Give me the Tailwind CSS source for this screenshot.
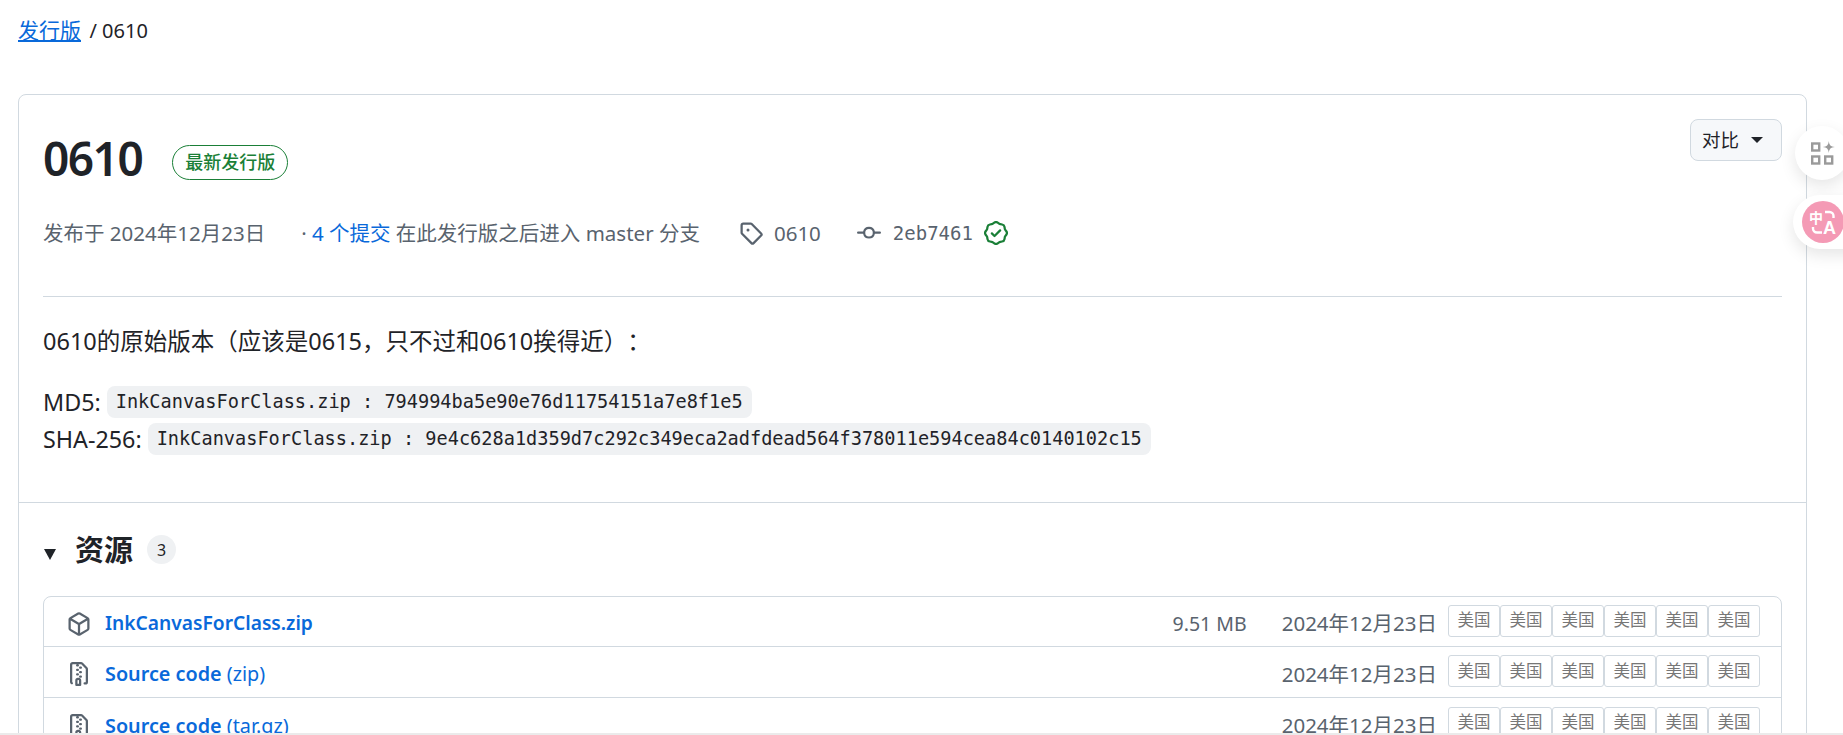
<!doctype html>
<html lang="zh-CN">
<head>
<meta charset="utf-8">
<title>0610</title>
<script src="https://cdn.jsdelivr.net/npm/@tailwindcss/browser@4"></script>
</head>
<body class="bg-white">
<div class="relative h-[735px] w-full overflow-hidden px-[18px] font-['Noto_Sans','Noto_Sans_CJK_SC',sans-serif] text-[#1f2328] [text-spacing-trim:space-all]">

  <!-- breadcrumb -->
  <nav class="h-[94px] pt-[15px] text-[21px] leading-[30px]">
    <a class="text-[#0969da] underline">发行版</a>
    <span class="ml-[3px] text-[20px]">/ 0610</span>
  </nav>

  <!-- release card -->
  <div class="w-[1789px] rounded-t-[8px] border border-[#d1d9e0]">
    <div class="flex h-[407px] flex-col px-[24px]">
      <div class="flex h-[202px] shrink-0 flex-col border-b border-[#d1d9e0]">
        <div class="mt-[28px] flex h-[70px] items-start">
          <h1 class="text-[46px] leading-[70px] font-semibold tracking-[-1.5px]">0610</h1>
          <span class="ml-[30px] mt-[22px] flex h-[35px] w-[116px] items-center justify-center rounded-full border border-[#1a7f37] text-[18px] font-medium text-[#1a7f37]">最新发行版</span>
          <button class="ml-auto -mt-[4px] flex h-[42px] w-[92px] items-center justify-center gap-[12px] rounded-[8px] border border-[#d1d9e0] bg-[#f6f8fa] pr-[7px] text-[18.5px]">
            对比
            <span class="h-0 w-0 border-x-[6px] border-t-[6px] border-x-transparent border-t-[#1f2328]"></span>
          </button>
        </div>
        <div class="mt-[26px] flex items-center text-[20.5px] leading-[28px] text-[#59636e]">
          <span>发布于 2024年12月23日</span>
          <span class="ml-[36px]">· <a class="text-[#0969da]">4 个提交</a> 在此发行版之后进入 master 分支</span>
          <svg class="ml-[39px]" width="24" height="24" viewBox="0 0 16 16" fill="#59636e"><path d="M1 7.775V2.75C1 1.784 1.784 1 2.75 1h5.025c.464 0 .91.184 1.238.513l6.25 6.25a1.75 1.75 0 0 1 0 2.474l-5.026 5.026a1.75 1.75 0 0 1-2.474 0l-6.25-6.25A1.752 1.752 0 0 1 1 7.775Zm1.5 0c0 .066.026.13.073.177l6.25 6.25a.25.25 0 0 0 .354 0l5.025-5.025a.25.25 0 0 0 0-.354l-6.25-6.25a.25.25 0 0 0-.177-.073H2.75a.25.25 0 0 0-.25.25ZM6 5a1 1 0 1 1 0 2 1 1 0 0 1 0-2Z"/></svg>
          <span class="ml-[11px]">0610</span>
          <svg class="ml-[36px]" width="24" height="24" viewBox="0 0 16 16" fill="#59636e"><path d="M11.93 8.5a4.002 4.002 0 0 1-7.86 0H.75a.75.75 0 0 1 0-1.5h3.32a4.002 4.002 0 0 1 7.86 0h3.32a.75.75 0 0 1 0 1.5Zm-1.43-.75a2.5 2.5 0 1 0-5 0 2.5 2.5 0 0 0 5 0Z"/></svg>
          <span class="ml-[12px] font-['DejaVu_Sans_Mono',monospace] text-[19px]">2eb7461</span>
          <svg class="ml-[11px]" width="24" height="24" viewBox="0 0 16 16" fill="#1a7f37"><path d="m9.585.52.929.68c.153.112.331.186.518.215l1.138.175a2.678 2.678 0 0 1 2.24 2.24l.174 1.139c.029.187.103.365.215.518l.68.928a2.677 2.677 0 0 1 0 3.17l-.68.928a1.174 1.174 0 0 0-.215.518l-.175 1.138a2.678 2.678 0 0 1-2.241 2.241l-1.138.175a1.17 1.17 0 0 0-.518.215l-.928.68a2.677 2.677 0 0 1-3.17 0l-.928-.68a1.174 1.174 0 0 0-.518-.215L3.83 14.41a2.678 2.678 0 0 1-2.24-2.24l-.175-1.138a1.17 1.17 0 0 0-.215-.518l-.68-.928a2.677 2.677 0 0 1 0-3.17l.68-.928c.112-.153.186-.331.215-.518l.175-1.14a2.678 2.678 0 0 1 2.24-2.24l1.139-.175c.187-.029.365-.103.518-.215l.928-.68a2.677 2.677 0 0 1 3.17 0ZM7.303 1.728l-.927.68a2.67 2.67 0 0 1-1.18.489l-1.137.174a1.179 1.179 0 0 0-.987.987l-.174 1.136a2.677 2.677 0 0 1-.489 1.18l-.68.928a1.18 1.18 0 0 0 0 1.394l.68.927c.256.348.424.753.489 1.18l.174 1.137c.078.509.478.909.987.987l1.136.174a2.67 2.67 0 0 1 1.18.489l.928.68c.414.305.979.305 1.394 0l.927-.68a2.67 2.67 0 0 1 1.18-.489l1.137-.174a1.18 1.18 0 0 0 .987-.987l.174-1.136a2.67 2.67 0 0 1 .489-1.18l.68-.928a1.176 1.176 0 0 0 0-1.394l-.68-.927a2.686 2.686 0 0 1-.489-1.18l-.174-1.137a1.179 1.179 0 0 0-.987-.987l-1.136-.174a2.677 2.677 0 0 1-1.18-.489l-.928-.68a1.176 1.176 0 0 0-1.394 0ZM11.28 6.78l-3.75 3.75a.75.75 0 0 1-1.06 0L4.72 8.78a.751.751 0 0 1 .018-1.042.751.751 0 0 1 1.042-.018l1.22 1.22 3.22-3.22a.751.751 0 0 1 1.042.018.751.751 0 0 1 .018 1.042Z"/></svg>
        </div>
      </div>
      <div class="pt-[28px] text-[23.3px]">
        <p class="h-[32px] text-[23.5px] leading-[32px]">0610的原始版本（应该是0615，只不过和0610挨得近）：</p>
        <div class="mt-[29px] flex h-[32px] items-center leading-[32px]">MD5:
          <code class="ml-[6px] flex h-[32px] items-center rounded-[8px] bg-[#eff1f3] px-[9px] font-['DejaVu_Sans_Mono',monospace] text-[18.6px]">InkCanvasForClass.zip : 794994ba5e90e76d11754151a7e8f1e5</code>
        </div>
        <div class="mt-[5px] flex h-[32px] items-center leading-[32px]">SHA-256:
          <code class="ml-[6px] flex h-[32px] items-center rounded-[8px] bg-[#eff1f3] px-[9px] font-['DejaVu_Sans_Mono',monospace] text-[18.6px]">InkCanvasForClass.zip : 9e4c628a1d359d7c292c349eca2adfdead564f378011e594cea84c0140102c15</code>
        </div>
      </div>
    </div>

    <!-- assets -->
    <div class="border-t border-[#d1d9e0] px-[24px]">
      <div class="flex h-[93px] items-center">
        <span class="ml-[1px] mt-[10px] h-0 w-0 border-x-[6.5px] border-t-[11px] border-x-transparent border-t-[#1f2328]"></span>
        <h2 class="ml-[19px] text-[29px] font-semibold">资源</h2>
        <span class="ml-[14px] flex h-[29px] w-[29px] items-center justify-center rounded-full bg-[#eff1f3] text-[16px]">3</span>
      </div>
      <div class="rounded-t-[8px] border border-[#d1d9e0]">
        <div class="flex h-[50px] items-center border-b border-[#d1d9e0] pl-[23px] pr-[21px] pt-[4px] text-[19.2px]">
          <svg width="24" height="24" viewBox="0 0 16 16" fill="#59636e"><path d="m8.878.392 5.25 3.045c.54.314.872.89.872 1.514v6.098a1.75 1.75 0 0 1-.872 1.514l-5.25 3.045a1.75 1.75 0 0 1-1.756 0l-5.25-3.045A1.75 1.75 0 0 1 1 11.049V4.951c0-.624.332-1.201.872-1.514L7.122.392a1.75 1.75 0 0 1 1.756 0ZM7.875 1.69l-4.63 2.685L8 7.133l4.755-2.758-4.63-2.685a.248.248 0 0 0-.25 0ZM2.5 5.677v5.372c0 .09.047.171.125.216l4.625 2.683V8.432Zm6.25 8.271 4.625-2.683a.25.25 0 0 0 .125-.216V5.677L8.75 8.432Z"/></svg>
          <a class="ml-[14px] font-semibold text-[#0969da]">InkCanvasForClass.zip</a>
          <span class="ml-auto text-[19.5px] text-[#59636e]">9.51 MB</span>
          <span class="ml-[35px] text-[20.5px] text-[#59636e]">2024年12月23日</span>
          <div class="ml-[11px] -mt-[6px] flex">
            <a class="flex h-[32px] w-[52px] items-center justify-center rounded-[3px] border border-[#d1d9e0] text-[16.5px] text-[#777]">美国</a>
            <a class="flex h-[32px] w-[52px] items-center justify-center rounded-[3px] border border-[#d1d9e0] text-[16.5px] text-[#777]">美国</a>
            <a class="flex h-[32px] w-[52px] items-center justify-center rounded-[3px] border border-[#d1d9e0] text-[16.5px] text-[#777]">美国</a>
            <a class="flex h-[32px] w-[52px] items-center justify-center rounded-[3px] border border-[#d1d9e0] text-[16.5px] text-[#777]">美国</a>
            <a class="flex h-[32px] w-[52px] items-center justify-center rounded-[3px] border border-[#d1d9e0] text-[16.5px] text-[#777]">美国</a>
            <a class="flex h-[32px] w-[52px] items-center justify-center rounded-[3px] border border-[#d1d9e0] text-[16.5px] text-[#777]">美国</a>
          </div>
        </div>
        <div class="flex h-[51px] items-center border-b border-[#d1d9e0] pl-[23px] pr-[21px] pt-[4px] text-[19.8px]">
          <svg width="24" height="24" viewBox="0 0 16 16" fill="#59636e"><path d="M3.5 1.75v11.5c0 .09.048.173.126.217a.75.75 0 0 1-.752 1.298A1.748 1.748 0 0 1 2 13.25V1.75C2 .784 2.784 0 3.75 0h5.586c.464 0 .909.185 1.237.513l2.914 2.914c.329.328.513.773.513 1.237v8.586A1.75 1.75 0 0 1 12.25 15h-.5a.75.75 0 0 1 0-1.5h.5a.25.25 0 0 0 .25-.25V4.664a.25.25 0 0 0-.073-.177L9.513 1.573a.25.25 0 0 0-.177-.073H7.25a.75.75 0 0 1 0 1.5h-.5a.75.75 0 0 1 0-1.5h-3a.25.25 0 0 0-.25.25Zm3.75 8.75h.5c.966 0 1.75.784 1.75 1.75v3a.75.75 0 0 1-.75.75h-2.5a.75.75 0 0 1-.75-.75v-3c0-.966.784-1.75 1.75-1.75ZM6 5.25a.75.75 0 0 1 .75-.75h.5a.75.75 0 0 1 0 1.5h-.5A.75.75 0 0 1 6 5.25Zm.75 2.25h.5a.75.75 0 0 1 0 1.5h-.5a.75.75 0 0 1 0-1.5ZM8 6.75A.75.75 0 0 1 8.75 6h.5a.75.75 0 0 1 0 1.5h-.5A.75.75 0 0 1 8 6.75ZM8.75 3h.5a.75.75 0 0 1 0 1.5h-.5a.75.75 0 0 1 0-1.5ZM8 9.75A.75.75 0 0 1 8.75 9h.5a.75.75 0 0 1 0 1.5h-.5A.75.75 0 0 1 8 9.75Zm-1 2.5v2.25h1v-2.25a.25.25 0 0 0-.25-.25h-.5a.25.25 0 0 0-.25.25Z"/></svg>
          <a class="ml-[14px] text-[#0969da]"><span class="font-semibold">Source code</span> (zip)</a>
          <span class="ml-auto text-[20.5px] text-[#59636e]">2024年12月23日</span>
          <div class="ml-[11px] -mt-[6px] flex">
            <a class="flex h-[32px] w-[52px] items-center justify-center rounded-[3px] border border-[#d1d9e0] text-[16.5px] text-[#777]">美国</a>
            <a class="flex h-[32px] w-[52px] items-center justify-center rounded-[3px] border border-[#d1d9e0] text-[16.5px] text-[#777]">美国</a>
            <a class="flex h-[32px] w-[52px] items-center justify-center rounded-[3px] border border-[#d1d9e0] text-[16.5px] text-[#777]">美国</a>
            <a class="flex h-[32px] w-[52px] items-center justify-center rounded-[3px] border border-[#d1d9e0] text-[16.5px] text-[#777]">美国</a>
            <a class="flex h-[32px] w-[52px] items-center justify-center rounded-[3px] border border-[#d1d9e0] text-[16.5px] text-[#777]">美国</a>
            <a class="flex h-[32px] w-[52px] items-center justify-center rounded-[3px] border border-[#d1d9e0] text-[16.5px] text-[#777]">美国</a>
          </div>
        </div>
        <div class="flex h-[51px] items-center pl-[23px] pr-[21px] pt-[4px] text-[19.8px]">
          <svg width="24" height="24" viewBox="0 0 16 16" fill="#59636e"><path d="M3.5 1.75v11.5c0 .09.048.173.126.217a.75.75 0 0 1-.752 1.298A1.748 1.748 0 0 1 2 13.25V1.75C2 .784 2.784 0 3.75 0h5.586c.464 0 .909.185 1.237.513l2.914 2.914c.329.328.513.773.513 1.237v8.586A1.75 1.75 0 0 1 12.25 15h-.5a.75.75 0 0 1 0-1.5h.5a.25.25 0 0 0 .25-.25V4.664a.25.25 0 0 0-.073-.177L9.513 1.573a.25.25 0 0 0-.177-.073H7.25a.75.75 0 0 1 0 1.5h-.5a.75.75 0 0 1 0-1.5h-3a.25.25 0 0 0-.25.25Zm3.75 8.75h.5c.966 0 1.75.784 1.75 1.75v3a.75.75 0 0 1-.75.75h-2.5a.75.75 0 0 1-.75-.75v-3c0-.966.784-1.75 1.75-1.75ZM6 5.25a.75.75 0 0 1 .75-.75h.5a.75.75 0 0 1 0 1.5h-.5A.75.75 0 0 1 6 5.25Zm.75 2.25h.5a.75.75 0 0 1 0 1.5h-.5a.75.75 0 0 1 0-1.5ZM8 6.75A.75.75 0 0 1 8.75 6h.5a.75.75 0 0 1 0 1.5h-.5A.75.75 0 0 1 8 6.75ZM8.75 3h.5a.75.75 0 0 1 0 1.5h-.5a.75.75 0 0 1 0-1.5ZM8 9.75A.75.75 0 0 1 8.75 9h.5a.75.75 0 0 1 0 1.5h-.5A.75.75 0 0 1 8 9.75Zm-1 2.5v2.25h1v-2.25a.25.25 0 0 0-.25-.25h-.5a.25.25 0 0 0-.25.25Z"/></svg>
          <a class="ml-[14px] text-[#0969da]"><span class="font-semibold">Source code</span> (tar.gz)</a>
          <span class="ml-auto text-[20.5px] text-[#59636e]">2024年12月23日</span>
          <div class="ml-[11px] -mt-[6px] flex">
            <a class="flex h-[32px] w-[52px] items-center justify-center rounded-[3px] border border-[#d1d9e0] text-[16.5px] text-[#777]">美国</a>
            <a class="flex h-[32px] w-[52px] items-center justify-center rounded-[3px] border border-[#d1d9e0] text-[16.5px] text-[#777]">美国</a>
            <a class="flex h-[32px] w-[52px] items-center justify-center rounded-[3px] border border-[#d1d9e0] text-[16.5px] text-[#777]">美国</a>
            <a class="flex h-[32px] w-[52px] items-center justify-center rounded-[3px] border border-[#d1d9e0] text-[16.5px] text-[#777]">美国</a>
            <a class="flex h-[32px] w-[52px] items-center justify-center rounded-[3px] border border-[#d1d9e0] text-[16.5px] text-[#777]">美国</a>
            <a class="flex h-[32px] w-[52px] items-center justify-center rounded-[3px] border border-[#d1d9e0] text-[16.5px] text-[#777]">美国</a>
          </div>
        </div>
      </div>
    </div>
  </div>

  <!-- floating browser-extension buttons -->
  <div class="absolute left-[1795px] top-[126px] flex h-[54px] w-[54px] items-center rounded-full bg-white pl-[16px] shadow-[0_6px_16px_rgba(0,0,0,0.1)]">
    <svg width="24" height="24" viewBox="0 0 24 24" fill="none" stroke="#9a9a9a" stroke-width="2.4"><rect x="1.2" y="2.5" width="7" height="7"/><rect x="1.2" y="15.5" width="7" height="7"/><rect x="14.2" y="15.5" width="7" height="7"/><path d="M17.8 0 C18.3 4.2 19.6 5.5 23.8 6 C19.6 6.5 18.3 7.8 17.8 12 C17.3 7.8 16 6.5 11.8 6 C16 5.5 17.3 4.2 17.8 0Z" fill="#9a9a9a" stroke="none"/></svg>
  </div>
  <div class="absolute left-[1793px] top-[195px] flex h-[54px] w-[70px] items-center rounded-l-full bg-white pl-[9px] shadow-[0_6px_16px_rgba(0,0,0,0.1)]">
    <div class="relative h-[42px] w-[42px] rounded-full bg-[#f49ab5] font-['Liberation_Sans',sans-serif] font-bold text-white">
      <svg class="absolute left-0 top-0" width="42" height="42" viewBox="0 0 42 42" fill="none" stroke="#fff" stroke-width="2.4"><path d="M23 11 h4.5 a4 4 0 0 1 4 4 v2"/><path d="M11 26 v1.5 a4 4 0 0 0 4 4 h5"/></svg>
      <span class="absolute left-[7px] top-[8px] font-['Noto_Sans_CJK_SC',sans-serif] text-[14px] leading-[16px]">中</span>
      <span class="absolute left-[21px] top-[18px] text-[18px] leading-[18px]">A</span>
    </div>
  </div>

  <!-- bottom strip -->
  <div class="absolute bottom-0 left-0 h-[2px] w-full bg-[#ebebeb]"></div>
</div>
</body>
</html>
